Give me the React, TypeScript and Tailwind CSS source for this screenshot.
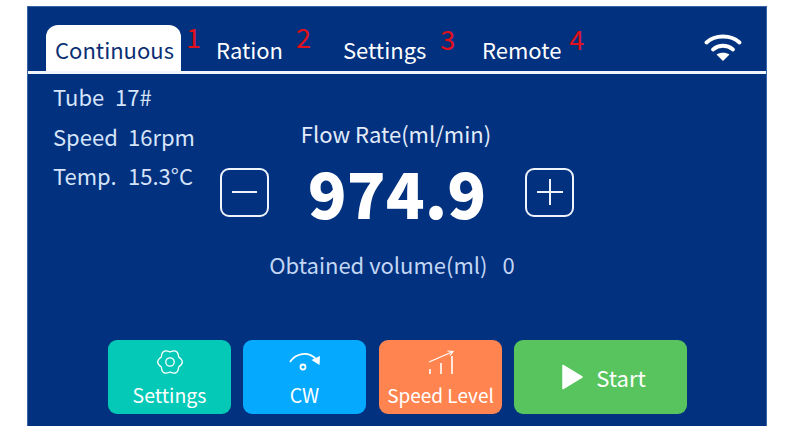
import React from "react";

const font = { fontFamily: '"Noto Sans CJK SC", "Noto Sans", sans-serif' };

function gearPath() {
  const c = 13;
  const pt = (r: number, deg: number) => {
    const a = (deg * Math.PI) / 180;
    return `${(c + r * Math.cos(a)).toFixed(2)} ${(c + r * Math.sin(a)).toFixed(2)}`;
  };
  let d = `M${pt(10, -30)}`;
  for (let i = 0; i < 6; i++) {
    const lobe = i * 60;
    d += ` Q${pt(16, lobe)} ${pt(10, lobe + 30)}`;
  }
  return d + " Z";
}

function Tab({ label, n, active, w, nw }: { label: string; n: string; active?: boolean; w: string; nw: string }) {
  return (
    <div className={`flex items-start ${w}`}>
      <div
        className={
          active
            ? "h-[46px] w-[135px] rounded-t-[12px] bg-white text-[#0b2f73] text-[22px] leading-[48px] text-center pl-[2px]"
            : "h-[46px] text-white text-[22px] leading-[48px]"
        }
      >
        {label}
      </div>
      <span className={`text-[#e0101c] text-[27px] leading-[30px] ${nw}`}>{n}</span>
    </div>
  );
}

function SmallBtn({ bg, label, icon, text }: { bg: string; label: string; icon: React.ReactNode; text?: string }) {
  return (
    <div className={`w-[123px] h-[74px] rounded-[9px] ${bg} flex flex-col items-center pt-[9px] text-white`}>
      <div className="h-[26px] flex items-center">{icon}</div>
      <div className={`${text ?? "text-[20px]"} leading-[30px] mt-[5px]`}>{label}</div>
    </div>
  );
}

export default function App() {
  return (
    <div className="w-[785px] h-[435px] bg-white pt-[6px] pl-[27px]" style={font}>
      <div className="w-[740px] h-[420px] bg-[#02317f] flex flex-col border-t border-r border-l border-[#3763a8]">
        <div className="h-[64px] pl-[18px] pr-[23px] pt-[18px] flex items-start shrink-0">
          <Tab label="Continuous" n="1" active w="w-[170px]" nw="ml-[5px] mt-[-3px]" />
          <Tab label="Ration" n="2" w="w-[127px]" nw="ml-[13px] mt-[-3px]" />
          <Tab label="Settings" n="3" w="w-[139px]" nw="ml-[14px] mt-[-1px]" />
          <Tab label="Remote" n="4" w="w-[222px]" nw="ml-[8px] mt-[-1px]" />
          <svg width="38" height="30" viewBox="0 0 38 30" className="mt-[8px]" fill="none" stroke="white" strokeWidth="3.8" strokeLinecap="round">
            <path d="M2.5 9.5 C11 1.5 27 1.5 35.5 9.5" />
            <path d="M9 16.5 C15 11.5 23 11.5 29 16.5" />
            <path d="M19 28 L12.5 21.5 C16 19 22 19 25.5 21.5 Z" fill="white" stroke="none" />
          </svg>
        </div>
        <div className="h-[3px] bg-[#f1f5fd] shrink-0" />
        <div className="flex-1 flex flex-col">
          <div className="flex h-[191px]">
            <div className="w-[192px] pl-[25px] pt-[3px] text-[#d5e4fa] text-[22px] leading-[39.5px] shrink-0">
              <div className="flex"><span className="w-[62px]">Tube</span><span>17#</span></div>
              <div className="flex"><span className="w-[75px]">Speed</span><span>16rpm</span></div>
              <div className="flex"><span className="w-[75px]">Temp.</span><span>15.3°C</span></div>
            </div>
            <div className="w-[354px] flex flex-col items-center">
              <div className="text-[#e2ecfb] text-[22px] leading-[30px] mt-[44px] ml-[-2px]">Flow Rate(ml/min)</div>
              <div className="w-full flex items-center justify-between mt-[15px]">
                <div className="w-[49px] h-[49px] rounded-[9px] border-2 border-[#eef3fc] flex items-center justify-center">
                  <div className="w-[25px] h-[2px] bg-[#eef3fc]" />
                </div>
                <div className="text-white font-black text-[64px] leading-[56px] mb-[2px]">974.9</div>
                <div className="w-[49px] h-[49px] rounded-[9px] border-2 border-[#eef3fc] flex items-center justify-center">
                  <svg width="26" height="26" viewBox="0 0 26 26" stroke="#eef3fc" strokeWidth="2"><path d="M0 13H26M13 0V26" /></svg>
                </div>
              </div>
              <div className="flex gap-[15px] text-[#c3d7f5] text-[22px] leading-[30px] mt-[28px] ml-[-10px]">
                <span>Obtained volume(ml)</span>
                <span>0</span>
              </div>
            </div>
          </div>
          <div className="flex pl-[80px] mt-[75px]">
            <SmallBtn
              bg="bg-[#04c9b7]"
              label="Settings"
              text="text-[19.5px]"
              icon={
                <svg width="26" height="26" viewBox="0 0 26 26" fill="none" stroke="white" strokeWidth="1.3" strokeLinejoin="round">
                  <path d={gearPath()} />
                  <circle cx="13" cy="13" r="4.2" />
                </svg>
              }
            />
            <div className="w-[12px] shrink-0" />
            <SmallBtn
              bg="bg-[#05a9fe]"
              label="CW"
              text="text-[19.5px]"
              icon={
                <svg width="32" height="22" viewBox="0 0 32 22" fill="none" stroke="white" strokeWidth="1.8">
                  <path d="M1 11 C7 2 19 0 27 8" />
                  <path d="M31 5 L30.5 14 L22.5 9 Z" fill="white" stroke="none" />
                  <circle cx="14" cy="16" r="2.5" strokeWidth="1.8" />
                </svg>
              }
            />
            <div className="w-[13px] shrink-0" />
            <SmallBtn
              bg="bg-[#ff8450]"
              label="Speed Level"
              text="text-[19px]"
              icon={
                <svg width="26" height="25" viewBox="0 0 26 25" fill="none" stroke="white" strokeWidth="1.6">
                  <path d="M1 12 L24 2" strokeWidth="1.2" />
                  <path d="M19.5 1 L25 1.5 L22 5.5" strokeWidth="1.2" />
                  <path d="M2 19V24M13 13V24M24 6V24" />
                </svg>
              }
            />
            <div className="w-[12px] shrink-0" />
            <div className="w-[173px] h-[74px] rounded-[9px] bg-[#57c45e] flex items-center justify-center text-white text-[22px] pl-[6px]">
              <svg width="22" height="26" viewBox="0 0 22 26" className="mr-[13px]"><path d="M2 1.5 L21 13 L2 24.5 Z" fill="white" stroke="white" strokeWidth="1.5" strokeLinejoin="round" /></svg>
              <span>Start</span>
            </div>
          </div>
        </div>
      </div>
    </div>
  );
}
